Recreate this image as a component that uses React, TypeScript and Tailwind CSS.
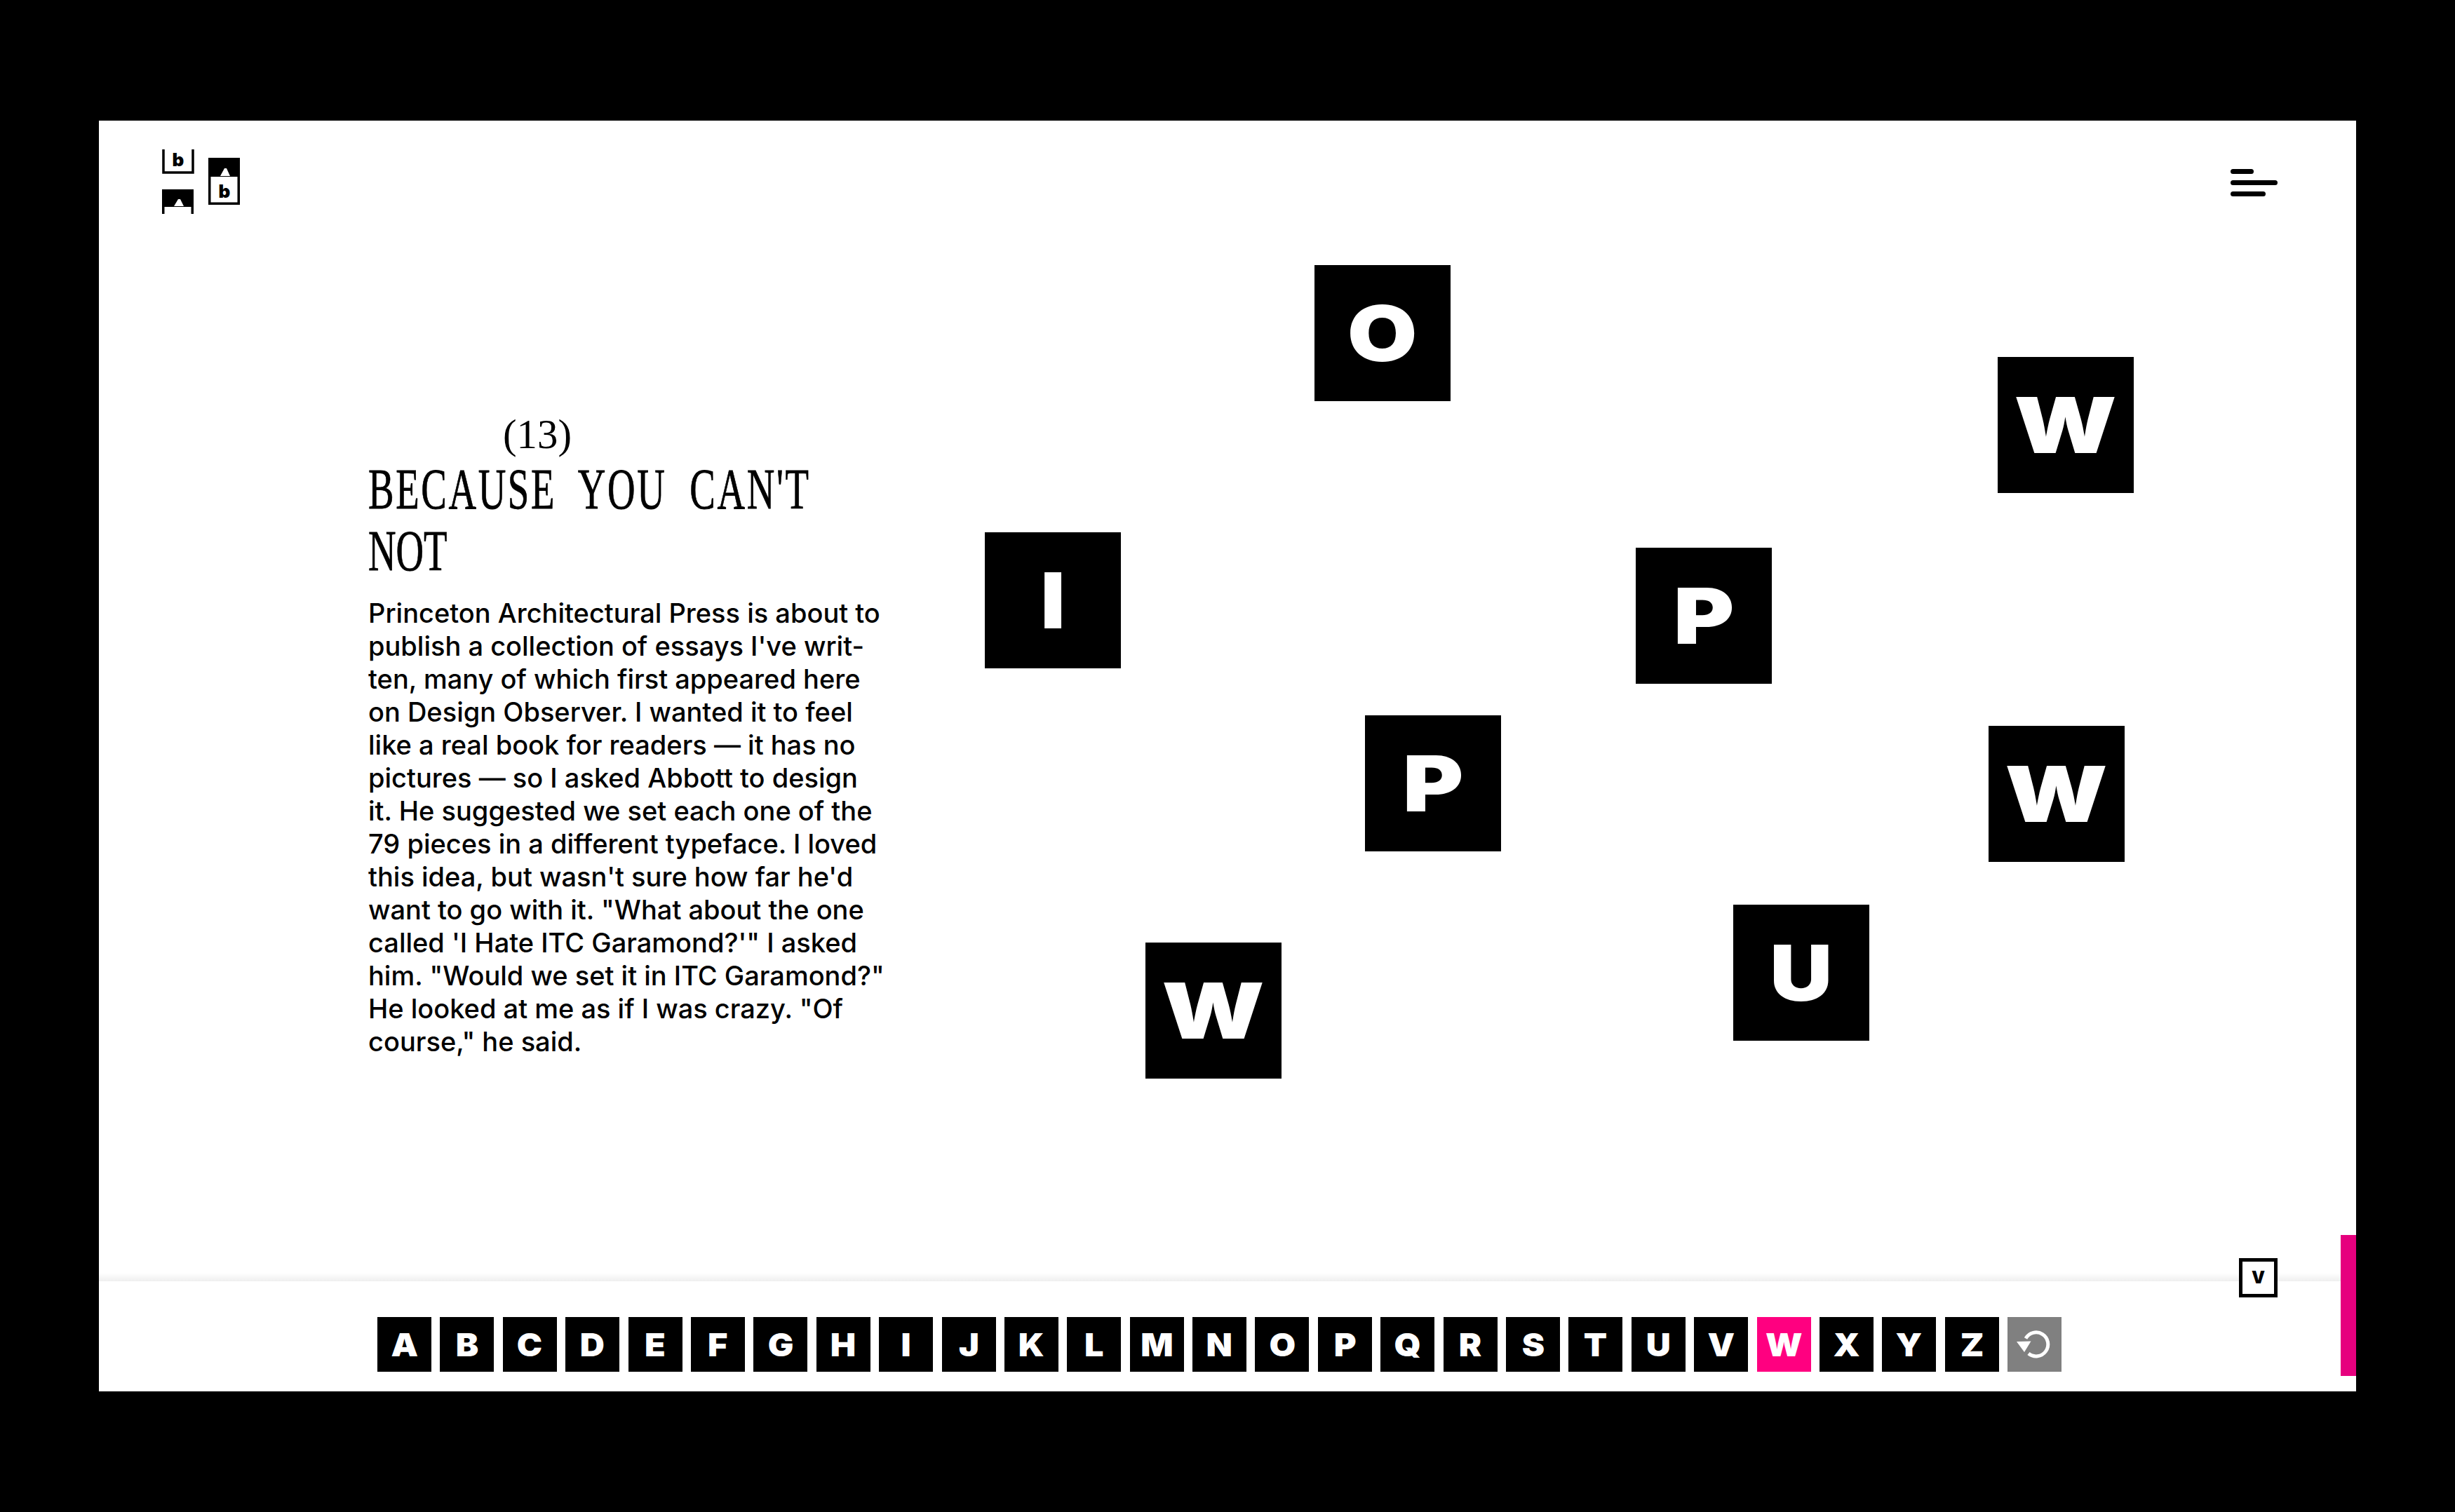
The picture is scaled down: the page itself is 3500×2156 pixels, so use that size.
const LETTERS = 'ABCDEFGHIJKLMNOPQRSTUVWXYZ'.split('');

const BODY = [
  'Princeton Architectural Press is about to',
  "publish a collection of essays I've writ-",
  'ten, many of which first appeared here',
  'on Design Observer. I wanted it to feel',
  'like a real book for readers — it has no',
  'pictures — so I asked Abbott to design',
  'it. He suggested we set each one of the',
  '79 pieces in a different typeface. I loved',
  "this idea, but wasn't sure how far he'd",
  'want to go with it. "What about the one',
  'called \'I Hate ITC Garamond?\'" I asked',
  'him. "Would we set it in ITC Garamond?"',
  'He looked at me as if I was crazy. "Of',
  'course," he said.',
];

const TILES = [
  { letter: 'O', stretch: 'scale-x-[1.17]', className: 'left-[1733px] top-[0px]' },
  { letter: 'W', stretch: 'scale-x-[1.23]', className: 'left-[2707px] top-[131px]' },
  { letter: 'I', stretch: 'scale-x-[1.1]', className: 'left-[1263px] top-[381px]' },
  { letter: 'P', stretch: 'scale-x-[1.2]', className: 'left-[2191px] top-[403px]' },
  { letter: 'P', stretch: 'scale-x-[1.2]', className: 'left-[1805px] top-[642px]' },
  { letter: 'W', stretch: 'scale-x-[1.23]', className: 'left-[2694px] top-[657px]' },
  { letter: 'U', stretch: 'scale-x-[1.12]', className: 'left-[2330px] top-[912px]' },
  { letter: 'W', stretch: 'scale-x-[1.23]', className: 'left-[1492px] top-[966px]' },
];

function Logo() {
  return (
    <svg width="112" height="92" viewBox="0 0 112 92">
      <path d="M2 0V33H44V0" fill="none" stroke="#000" strokeWidth="3.5" />
      <text x="23" y="24" textAnchor="middle" fontFamily="Inter" fontWeight="900" fontSize="26">b</text>
      <rect x="0" y="57" width="45" height="35" fill="#000" />
      <rect x="3.5" y="82" width="38" height="10" fill="#fff" />
      <path d="M17 81L23 71H26L31 81Z" fill="#fff" />
      <rect x="66" y="12" width="45" height="67" fill="#000" />
      <rect x="69.5" y="39" width="38" height="36.5" fill="#fff" />
      <path d="M83 38L89 27H92L97 38Z" fill="#fff" />
      <text x="89" y="69" textAnchor="middle" fontFamily="Inter" fontWeight="900" fontSize="26">b</text>
    </svg>
  );
}

function ResetIcon() {
  return (
    <svg width="77" height="78" viewBox="0 0 77 78">
      <path d="M26 30.5A17 17 0 1 1 30 52" fill="none" stroke="#fff" strokeWidth="5" />
      <path d="M13 35L33.5 34.5L24 50Z" fill="#fff" />
    </svg>
  );
}

export default function App() {
  return (
    <div className="h-[2156px] w-[3500px] bg-black px-[141px] py-[172px]">
      <div className="relative flex h-[1812px] w-[3218px] flex-col overflow-hidden bg-white text-black [font-family:Inter,sans-serif]">
        <header className="flex h-[206px] items-start justify-between pl-[90px] pr-[112px] pt-[41px]">
          <Logo />
          <div className="mt-[28px] flex w-[67px] flex-col gap-[9.5px]">
            <span className="h-[6.5px] w-[33px] rounded-full bg-black" />
            <span className="h-[6.5px] w-[67px] rounded-full bg-black" />
            <span className="h-[6.5px] w-[50px] rounded-full bg-black" />
          </div>
        </header>

        <main className="relative flex-1 pl-[384px]">
          <div className="ml-[192px] mt-[211px] text-[60px] leading-[60px] [font-family:'Liberation_Serif',serif]">
            <span className="inline-block origin-left scale-x-[0.98] whitespace-nowrap">(13)</span>
          </div>
          <h1 className="mt-[4px] text-[83px] font-normal leading-[88px] [-webkit-text-stroke:0.8px_black] [font-family:'Liberation_Serif',serif]">
            <span className="block origin-left scale-x-[0.66] whitespace-nowrap tracking-[4px] [word-spacing:25px]">BECAUSE YOU CAN&apos;T</span>
            <span className="block origin-left scale-x-[0.66] whitespace-nowrap">NOT</span>
          </h1>
          <div className="mt-[22px] text-[38px] font-medium leading-[47px]">
            {BODY.map((line) => (
              <div key={line} className="whitespace-nowrap">{line}</div>
            ))}
          </div>

          {TILES.map((tile) => (
            <div
              key={tile.className}
              className={`absolute flex h-[194px] w-[194px] items-center justify-center bg-black text-[110px] font-black leading-none text-white ${tile.className}`}
            >
              <span className={`inline-block ${tile.stretch}`}>{tile.letter}</span>
            </div>
          ))}
        </main>

        <footer className="relative h-[157px] pl-[397px] pt-[51px]">
          <div className="absolute inset-x-0 top-[-12px] h-[12px] bg-linear-to-b from-white to-[#efefef]" />
          <div className="flex gap-[12.4px]">
            {LETTERS.map((letter) => (
              <div
                key={letter}
                className={`flex h-[78px] w-[77px] items-center justify-center text-[45px] font-black leading-none text-white ${letter === 'W' ? 'bg-[#ff0080]' : 'bg-black'}`}
              >
                <span className="inline-block scale-x-[1.08]">{letter}</span>
              </div>
            ))}
            <div className="flex h-[78px] w-[77px] items-center justify-center bg-[#808080]">
              <ResetIcon />
            </div>
          </div>
          <div className="absolute left-[3051px] top-[-33px] flex h-[56px] w-[55px] items-center justify-center border-[5px] border-black bg-white text-[24px] font-black leading-none">
            V
          </div>
        </footer>

        <div className="absolute bottom-[22px] right-0 h-[201px] w-[22px] bg-[#e6007e]" />
      </div>
    </div>
  );
}
